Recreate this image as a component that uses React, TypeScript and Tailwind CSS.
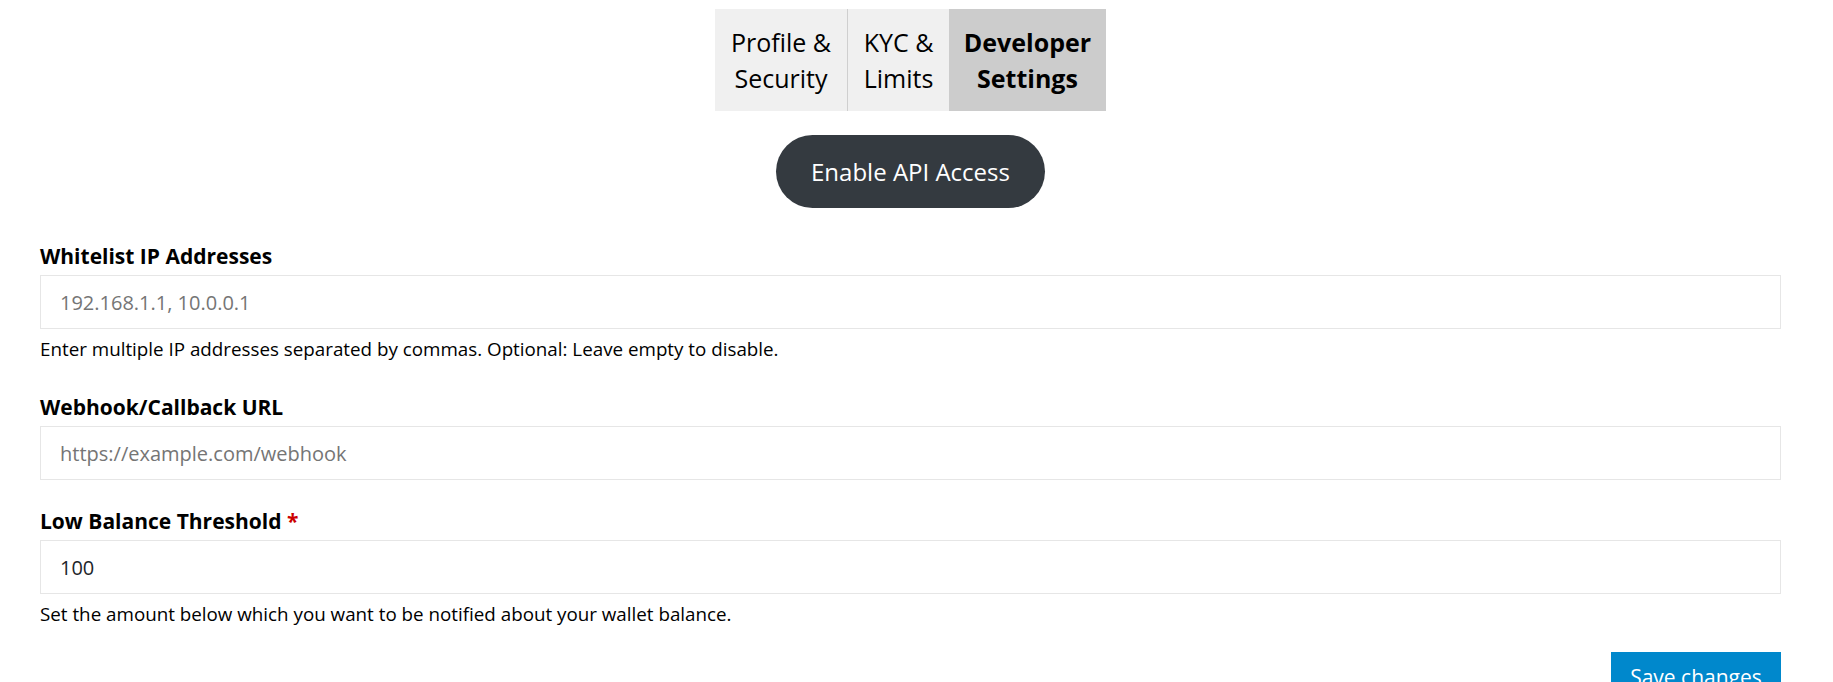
import React from "react";

export default function App() {
  return (
    <div className="min-h-screen bg-white pl-[40px] pr-[52px] font-['Open_Sans',sans-serif] text-[#000]">
      <div className="flex justify-center pt-[9px]">
        <div className="flex">
          <div className="w-[133px] border-r border-[#cfcfcf] bg-[#f0f0f0] py-[15px] text-center text-[25px] leading-[36px]">
            Profile &amp;
            <br />
            Security
          </div>
          <div className="w-[101px] bg-[#f0f0f0] py-[15px] text-center text-[25px] leading-[36px]">
            KYC &amp;
            <br />
            Limits
          </div>
          <div className="w-[157px] bg-[#cccccc] py-[15px] text-center text-[25px] font-bold leading-[36px]">
            Developer
            <br />
            Settings
          </div>
        </div>
      </div>

      <div className="mt-[24px] flex justify-center">
        <button className="h-[73px] w-[269px] rounded-full bg-[#343a40] text-[24px] text-white">
          Enable API Access
        </button>
      </div>

      <div className="mt-[34px]">
        <label className="mb-[5px] block text-[21px] font-bold leading-[28px]">
          Whitelist IP Addresses
        </label>
        <input
          className="block h-[54px] w-full border border-[#e6e6e6] bg-white px-[19px] text-[20px] text-[#212529] outline-none placeholder:text-[#757575]"
          placeholder="192.168.1.1, 10.0.0.1"
        />
        <p className="mt-[8px] text-[18.8px] leading-[25px]">
          Enter multiple IP addresses separated by commas. Optional: Leave empty to disable.
        </p>
      </div>

      <div className="mt-[31px]">
        <label className="mb-[5px] block text-[21px] font-bold leading-[28px]">
          Webhook/Callback URL
        </label>
        <input
          className="block h-[54px] w-full border border-[#e6e6e6] bg-white px-[19px] text-[20px] text-[#212529] outline-none placeholder:text-[#757575]"
          placeholder="https://example.com/webhook"
        />
      </div>

      <div className="mt-[27px]">
        <label className="mb-[5px] block text-[21px] font-bold leading-[28px]">
          Low Balance Threshold <span className="text-[#cc0000]">*</span>
        </label>
        <input
          className="block h-[54px] w-full border border-[#e6e6e6] bg-white px-[19px] text-[20px] text-[#212529] outline-none"
          defaultValue="100"
        />
        <p className="mt-[8px] text-[18.8px] leading-[25px]">
          Set the amount below which you want to be notified about your wallet balance.
        </p>
      </div>

      <div className="mt-[25px] flex justify-end">
        <button className="w-[170px] bg-[#0088cc] py-[10px] text-[21px] leading-[30px] text-white">
          Save changes
        </button>
      </div>
    </div>
  );
}
